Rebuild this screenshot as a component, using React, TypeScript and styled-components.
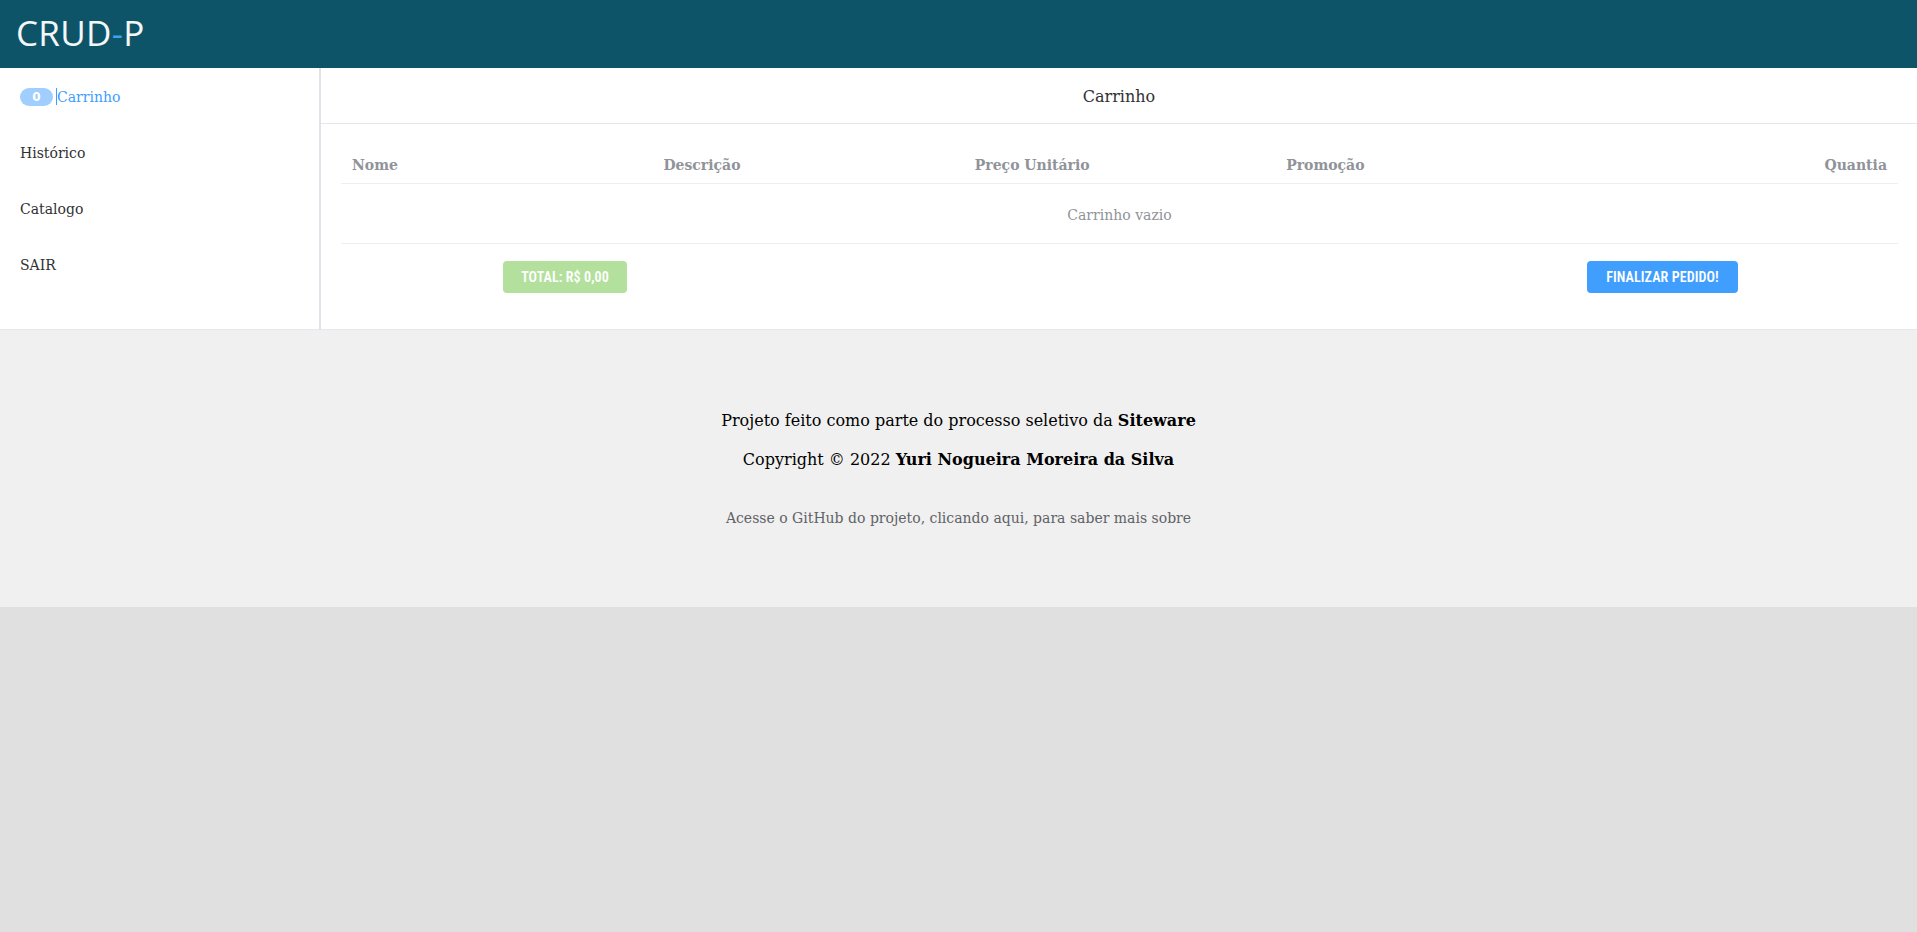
import React from "react";
import styled, { createGlobalStyle } from "styled-components";

const GlobalStyle = createGlobalStyle`
  html, body {
    margin: 0;
    padding: 0;
    background: #e0e0e0;
    font-family: "DejaVu Serif", serif;
  }
  * { box-sizing: border-box; }
`;

const Page = styled.div`
  display: flex;
  flex-direction: column;
`;

const TopBar = styled.header`
  height: 68px;
  background: #0e5469;
  display: flex;
  align-items: center;
  padding-left: 16px;
`;

const Logo = styled.div`
  font-family: "Open Sans", "Noto Sans", sans-serif;
  font-size: 35px;
  color: #f4f7f8;
  letter-spacing: 0.3px;
  line-height: 1;
  margin-top: -3px;
`;

const Dash = styled.span`
  color: #3aa3ec;
`;

const Body = styled.div`
  display: flex;
  background: #ffffff;
  border-bottom: 1px solid #e4e7ed;
`;

const Sidebar = styled.nav`
  width: 321px;
  flex: none;
  border-right: 2px solid #e1e3ea;
  display: flex;
  flex-direction: column;
  padding-bottom: 37px;
`;

const MenuItem = styled.div<{ $active?: boolean }>`
  height: 56px;
  display: flex;
  align-items: center;
  padding-left: 20px;
  padding-top: 1px;
  font-size: 14px;
  color: ${(p) => (p.$active ? "#409eff" : "#303133")};
`;

const Badge = styled.span`
  width: 33px;
  height: 18px;
  border-radius: 9px;
  background: #a0cfff;
  color: #ffffff;
  font-size: 12px;
  font-weight: bold;
  display: flex;
  align-items: center;
  justify-content: center;
  font-family: "DejaVu Sans", sans-serif;
`;

const Caret = styled.span`
  width: 1px;
  height: 17px;
  background: #409eff;
  margin: 0 0 0 3px;
`;

const Main = styled.main`
  flex: 1;
  display: flex;
  flex-direction: column;
`;

const MainTitle = styled.div`
  height: 56px;
  padding-top: 2px;
  display: flex;
  align-items: center;
  justify-content: center;
  font-size: 16px;
  color: #303133;
  border-bottom: 1px solid #e4e7ed;
`;

const Content = styled.div`
  padding: 20px 19px 36px 20px;
  display: flex;
  flex-direction: column;
`;

const Row = styled.div<{ $height: number }>`
  display: grid;
  grid-template-columns: repeat(5, 1fr);
  height: ${(p) => p.$height}px;
  padding-top: 2px;
  align-items: center;
  border-bottom: 1px solid #ebeef5;
`;

const HeadCell = styled.div<{ $right?: boolean }>`
  padding: 0 11px;
  font-size: 14px;
  font-weight: bold;
  color: #909399;
  text-align: ${(p) => (p.$right ? "right" : "left")};
`;

const EmptyRow = styled.div`
  height: 60px;
  display: flex;
  align-items: center;
  justify-content: center;
  padding-top: 2px;
  font-size: 14px;
  color: #909399;
  border-bottom: 1px solid #ebeef5;
`;

const Actions = styled.div`
  display: flex;
  justify-content: space-between;
  padding: 0 160px 0 162px;
  margin-top: 17px;
`;

const Button = styled.button<{ $variant: "success" | "primary" }>`
  height: 32px;
  padding: 0 16px;
  border: none;
  border-radius: 4px;
  color: #ffffff;
  font-family: "Liberation Sans Narrow", "Roboto Condensed", "Roboto", sans-serif;
  font-weight: 600;
  font-size: 14px;
  letter-spacing: 0.1px;
  background: ${(p) => (p.$variant === "success" ? "#b3e19d" : "#409eff")};
  width: ${(p) => (p.$variant === "success" ? "124px" : "151px")};
`;

const Footer = styled.footer`
  background: #f0f0f0;
  height: 277px;
  display: flex;
  flex-direction: column;
  align-items: center;
  padding-top: 79px;
`;

const FooterLine = styled.p<{ $muted?: boolean; $gap: number }>`
  margin: ${(p) => p.$gap}px 0 0 0;
  font-size: ${(p) => (p.$muted ? "14px" : "16px")};
  line-height: ${(p) => (p.$muted ? "20px" : "24px")};
  color: ${(p) => (p.$muted ? "#606266" : "#000000")};
`;

export default function App() {
  return (
    <>
      <GlobalStyle />
      <Page>
        <TopBar>
          <Logo>
            CRUD<Dash>-</Dash>P
          </Logo>
        </TopBar>
        <Body>
          <Sidebar>
            <MenuItem $active>
              <Badge>0</Badge>
              <Caret />
              Carrinho
            </MenuItem>
            <MenuItem>Histórico</MenuItem>
            <MenuItem>Catalogo</MenuItem>
            <MenuItem>SAIR</MenuItem>
          </Sidebar>
          <Main>
            <MainTitle>Carrinho</MainTitle>
            <Content>
              <Row $height={40}>
                <HeadCell>Nome</HeadCell>
                <HeadCell>Descrição</HeadCell>
                <HeadCell>Preço Unitário</HeadCell>
                <HeadCell>Promoção</HeadCell>
                <HeadCell $right>Quantia</HeadCell>
              </Row>
              <EmptyRow>Carrinho vazio</EmptyRow>
              <Actions>
                <Button $variant="success">TOTAL: R$ 0,00</Button>
                <Button $variant="primary">FINALIZAR PEDIDO!</Button>
              </Actions>
            </Content>
          </Main>
        </Body>
        <Footer>
          <FooterLine $gap={0}>
            Projeto feito como parte do processo seletivo da <b>Siteware</b>
          </FooterLine>
          <FooterLine $gap={15}>
            Copyright © 2022 <b>Yuri Nogueira Moreira da Silva</b>
          </FooterLine>
          <FooterLine $gap={36} $muted>
            Acesse o GitHub do projeto, clicando aqui, para saber mais sobre
          </FooterLine>
        </Footer>
      </Page>
    </>
  );
}
